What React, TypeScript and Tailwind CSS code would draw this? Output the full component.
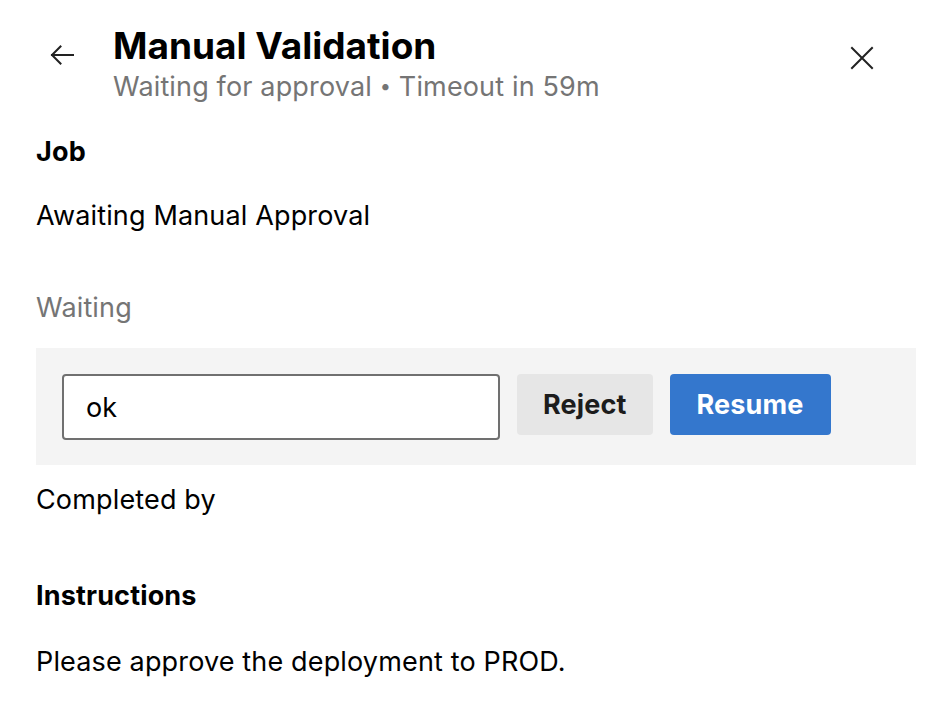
import React from 'react';

const font = { fontFamily: 'Inter, "Noto Sans", sans-serif' };

const App: React.FC = () => {
  return (
    <div className="w-[942px] h-[708px] bg-white text-black overflow-hidden font-['Inter',sans-serif]">
      {/* Header */}
      <div className="flex items-start pl-[48px] pr-[68px] pt-[25px]">
        <button className="mt-[18px] w-[28px] h-[24px] flex items-center justify-center text-[#222]">
          <svg width="26" height="22" viewBox="0 0 26 22" fill="none" stroke="currentColor" strokeWidth="2" strokeLinecap="square">
            <path d="M3 11h21" />
            <path d="M11.5 2.5L3 11l8.5 8.5" />
          </svg>
        </button>
        <div className="ml-[37px] flex-1">
          <h1 className="text-[37px] leading-[42px] font-bold">Manual Validation</h1>
          <div className="text-[27px] leading-[38px] text-[#757575] tracking-[0.15px]">
            Waiting for approval <span className="text-[20px] align-[3px]">•</span> Timeout in 59m
          </div>
        </div>
        <button className="mt-[21px] w-[24px] h-[24px] flex items-center justify-center text-[#222]">
          <svg width="24" height="24" viewBox="0 0 24 24" fill="none" stroke="currentColor" strokeWidth="2" strokeLinecap="square">
            <path d="M2 2l20 20M22 2L2 22" />
          </svg>
        </button>
      </div>

      {/* Body */}
      <div className="px-[36px] pt-[30px] text-[27px] leading-[32px] tracking-[0.15px]" style={font}>
        <div className="font-bold">Job</div>
        <div className="mt-[32px]">Awaiting Manual Approval</div>
        <div className="mt-[60px] text-[#757575]">Waiting</div>

        <div className="mt-[24px] w-[880px] h-[117px] bg-[#f4f4f4] flex items-start gap-[17px] pl-[26px] pt-[26px]">
          <input
            readOnly
            value="ok"
            className="w-[438px] h-[66px] bg-white border-2 border-[#707070] rounded-[4px] px-[22px] text-[27px] outline-none"
          />
          <button className="h-[61px] px-[26px] bg-[#e6e6e6] rounded-[4px] font-bold text-[#1c1c1c]">Reject</button>
          <button className="h-[61px] px-[27px] bg-[#3477cd] rounded-[4px] font-bold text-white">Resume</button>
        </div>

        <div className="mt-[19px]">Completed by</div>
        <div className="mt-[64px] font-bold">Instructions</div>
        <div className="mt-[34px]">Please approve the deployment to PROD.</div>
      </div>
    </div>
  );
};

export default App;
